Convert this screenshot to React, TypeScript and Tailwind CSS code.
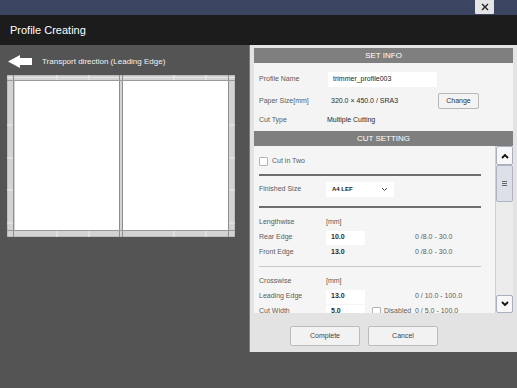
import React from 'react';

const label = "text-[7px] text-[#5b5b5b]";
const value = "text-[7px] text-[#2a2a2a]";

function Checkbox() {
  return <span className="inline-block w-[9px] h-[9px] bg-white border border-[#b4b4b4] rounded-[1px]" />;
}

function Row({ name, val, input, range, disabled }: { name: string; val?: string; input?: boolean; range?: string; disabled?: boolean }) {
  const unit = val !== undefined && val.startsWith('[');
  return (
    <div className="flex items-center h-[15px] shrink-0">
      <div className={`w-[67px] ${label}`}>{name}</div>
      <div className="w-[89px] flex items-center">
        {input ? (
          <div className={`w-[39px] h-[14px] bg-white flex items-center pl-[5px] font-bold ${value}`}>{val}</div>
        ) : unit ? (
          <div className={label}>{val}</div>
        ) : (
          <div className={`pl-[5px] font-bold ${value}`}>{val}</div>
        )}
        {disabled && (
          <div className="flex items-center gap-[3px] ml-[7px]">
            <Checkbox />
            <span className={label}>Disabled</span>
          </div>
        )}
      </div>
      {range && <div className={label}>{range}</div>}
    </div>
  );
}

function Preview() {
  return (
    <svg width="228" height="162" viewBox="0 0 228 162" className="block">
      <rect x="0" y="0" width="228" height="162" fill="#d3d3d3" stroke="#a9a9a9" />
      <line x1="0" y1="2.5" x2="228" y2="2.5" stroke="#e4e4e4" />
      <rect x="8" y="6" width="104" height="149" fill="#ffffff" />
      <rect x="116" y="6" width="105" height="149" fill="#ffffff" />
      {[50, 82, 167, 199].map((x) => (
        <g key={x}>
          <line x1={x} y1="0" x2={x} y2="5" stroke="#ececec" />
          <line x1={x} y1="156" x2={x} y2="162" stroke="#ececec" />
        </g>
      ))}
      {[50, 83, 115, 148].map((y) => (
        <g key={y}>
          <line x1="0" y1={y} x2="6" y2={y} stroke="#ececec" />
          <line x1="222" y1={y} x2="228" y2={y} stroke="#ececec" />
        </g>
      ))}
      <line x1="6.5" y1="0" x2="6.5" y2="162" stroke="#8e8e8e" />
      <line x1="112.5" y1="0" x2="112.5" y2="162" stroke="#8e8e8e" />
      <line x1="115.5" y1="0" x2="115.5" y2="162" stroke="#8e8e8e" />
      <line x1="221.5" y1="0" x2="221.5" y2="162" stroke="#8e8e8e" />
      <line x1="0" y1="5.5" x2="228" y2="5.5" stroke="#9a9a9a" />
      <line x1="0" y1="155.5" x2="228" y2="155.5" stroke="#9a9a9a" />
    </svg>
  );
}

export default function App() {
  return (
    <div className="w-[517px] h-[388px] overflow-hidden bg-[#545454] font-['Liberation_Sans',Arial,sans-serif] flex flex-col">
      {/* top strip */}
      <div className="h-[15px] bg-[#3b4562] flex justify-end pr-[23px] shrink-0">
        <div className="w-[19px] h-[14px] bg-[#e4e4e4] rounded-b-[1px] flex items-center justify-center">
          <svg width="8" height="8" viewBox="0 0 8 8">
            <path d="M1 1 L7 7 M7 1 L1 7" stroke="#222" strokeWidth="1.4" />
          </svg>
        </div>
      </div>

      {/* title */}
      <div className="h-[30px] bg-[#1c1c1c] flex items-center px-[10px] text-white text-[11px] shrink-0">
        Profile Creating
      </div>

      <div className="flex flex-1 min-h-0">
        {/* left: paper preview */}
        <div className="w-[249px] shrink-0 pt-[10px] pl-[7px]">
          <div className="flex items-center h-[13px] pl-[1px]">
            <svg width="24" height="13" viewBox="0 0 24 13">
              <polygon points="0,6.5 12,0 12,3 24,3 24,10 12,10 12,13" fill="#ffffff" />
            </svg>
            <span className="ml-[10px] text-[8px] text-[#f2f2f2]">Transport direction (Leading Edge)</span>
          </div>
          <div className="mt-[7px]">
            <Preview />
          </div>
        </div>

        {/* right: settings */}
        <div className="w-[268px] h-[307px] shrink-0 bg-[#e3e3e3] border-l border-[#7c7c7c] pl-[4px] pr-[4px] pt-[3px] flex flex-col">
          <div className="h-[15px] bg-[#7f7f7f] text-white text-[8px] flex items-center justify-center shrink-0">SET INFO</div>
          <div className="h-[68px] bg-[#f4f4f4] pl-[5px] pt-[9px] shrink-0">
            <div className="flex items-center h-[15px]">
              <div className={`w-[69px] ${label}`}>Profile Name</div>
              <div className="w-[109px] h-[15px] bg-white flex items-center pl-[5px] text-[7px] text-[#222]">trimmer_profile003</div>
            </div>
            <div className="flex items-center h-[16px] mt-[6px]">
              <div className={`w-[72px] ${label}`}>Paper Size[mm]</div>
              <div className={`w-[107px] ${value}`}>320.0 × 450.0 / SRA3</div>
              <div className="w-[41px] h-[16px] bg-[#f3f3f3] border border-[#b8b8b8] rounded-[2px] flex items-center justify-center text-[7px] text-[#333]">Change</div>
            </div>
            <div className="flex items-center h-[15px] mt-[4px]">
              <div className={`w-[68px] ${label}`}>Cut Type</div>
              <div className={value}>Multiple Cutting</div>
            </div>
          </div>

          <div className="h-[15px] bg-[#7f7f7f] text-white text-[8px] flex items-center justify-center shrink-0">CUT SETTING</div>

          <div className="h-[167px] flex shrink-0">
            <div className="flex-1 overflow-hidden bg-[#f5f5f5] pl-[5px] pr-[14px] flex flex-col">
              <div className="flex items-center gap-[4px] h-[14px] mt-[8px] shrink-0">
                <Checkbox />
                <span className={label}>Cut in Two</span>
              </div>
              <div className="h-[2px] bg-[#6e6e6e] mt-[6px] shrink-0" />
              <div className="flex items-center h-[15px] mt-[6px] shrink-0">
                <div className={`w-[67px] ${label}`}>Finished Size</div>
                <div className="w-[68px] h-[15px] bg-white flex items-center justify-between pl-[6px] pr-[6px]">
                  <span className="text-[6px] font-bold text-[#222]">A4 LEF</span>
                  <svg width="7" height="5" viewBox="0 0 7 5">
                    <polyline points="1,1 3.5,3.5 6,1" fill="none" stroke="#444" strokeWidth="1" />
                  </svg>
                </div>
              </div>
              <div className="h-[2px] bg-[#6e6e6e] mt-[9px] shrink-0" />
              <div className="mt-[7px] flex flex-col">
                <Row name="Lengthwise" val="[mm]" />
                <Row name="Rear Edge" val="10.0" input range="0 /8.0 - 30.0" />
                <Row name="Front Edge" val="13.0" range="0 /8.0 - 30.0" />
              </div>
              <div className="h-[1px] bg-[#c9c9c9] mt-[6px] shrink-0" />
              <div className="mt-[7px] flex flex-col">
                <Row name="Crosswise" val="[mm]" />
                <Row name="Leading Edge" val="13.0" input range="0 / 10.0 - 100.0" />
                <Row name="Cut Width" val="5.0" input disabled range="0 / 5.0 - 100.0" />
              </div>
            </div>

            {/* scrollbar */}
            <div className="w-[18px] bg-[#ececec] border-l border-[#d0d0d0] flex flex-col justify-between">
              <div className="flex flex-col">
                <div className="h-[19px] bg-[#f7f7f9] border border-[#a9b0c0] rounded-[2px] flex items-center justify-center">
                  <svg width="8" height="6" viewBox="0 0 8 6">
                    <polyline points="1,5 4,2 7,5" fill="none" stroke="#111" strokeWidth="1.8" />
                  </svg>
                </div>
                <div className="h-[37px] bg-[#dde0e8] border border-[#aeb4c4] rounded-[2px] flex flex-col items-center justify-center gap-[1px]">
                  <span className="w-[5px] h-[1px] bg-[#666]" />
                  <span className="w-[5px] h-[1px] bg-[#666]" />
                  <span className="w-[5px] h-[1px] bg-[#666]" />
                </div>
              </div>
              <div className="h-[18px] bg-[#f7f7f9] border border-[#a9b0c0] rounded-[2px] flex items-center justify-center">
                <svg width="8" height="6" viewBox="0 0 8 6">
                  <polyline points="1,1 4,4 7,1" fill="none" stroke="#111" strokeWidth="1.8" />
                </svg>
              </div>
            </div>
          </div>

          <div className="flex gap-[8px] pl-[36px] pt-[13px]">
            <div className="w-[70px] h-[20px] bg-[#f2f2f2] border border-[#bcbcbc] rounded-[2px] flex items-center justify-center text-[7px] text-[#444]">Complete</div>
            <div className="w-[70px] h-[20px] bg-[#f2f2f2] border border-[#bcbcbc] rounded-[2px] flex items-center justify-center text-[7px] text-[#444]">Cancel</div>
          </div>
        </div>
      </div>
    </div>
  );
}
